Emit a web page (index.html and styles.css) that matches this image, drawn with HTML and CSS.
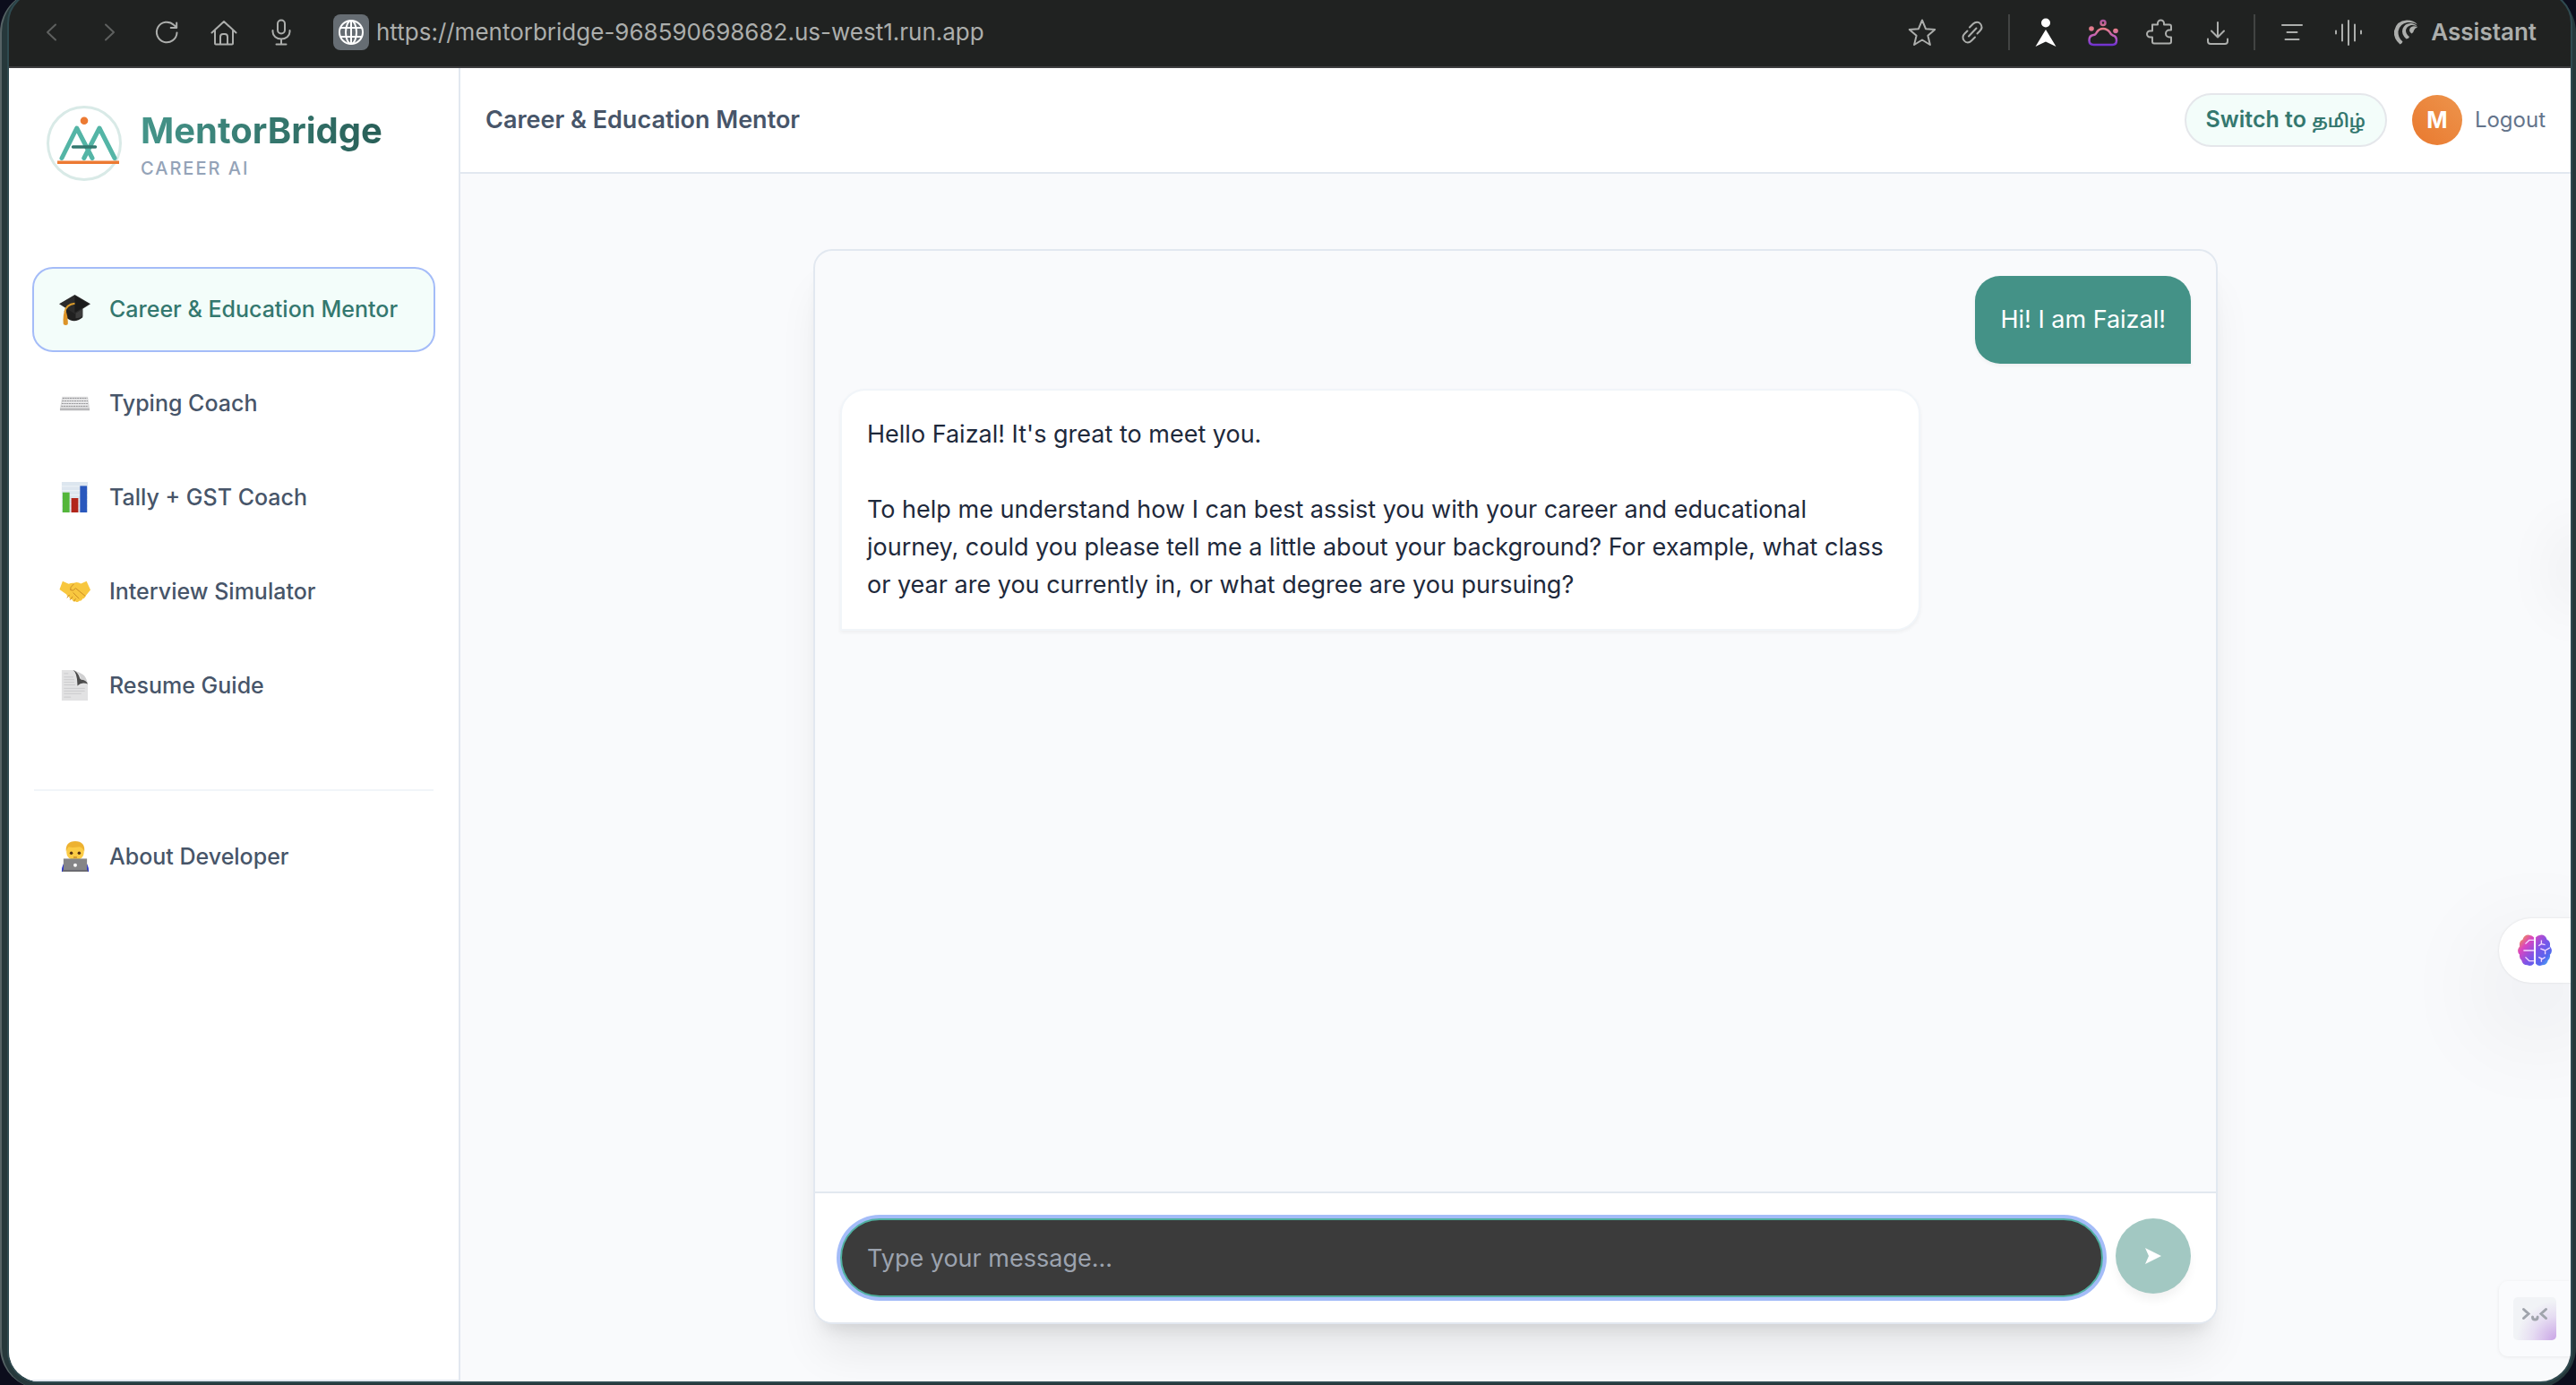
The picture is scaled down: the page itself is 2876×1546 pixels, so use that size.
FILE: index.html
```html
<!DOCTYPE html>
<html lang="en">
<head>
<meta charset="utf-8">
<meta name="viewport" content="width=device-width, initial-scale=1">
<title>MentorBridge Career AI</title>
<link rel="stylesheet" href="styles.css">
</head>
<body>
<div class="window">
  <div class="browser">
    <div class="toolbar">
      <div class="tools">
        <button class="tool tool-dim" aria-label="Back"><svg viewBox="0 0 40 40"><path d="M24 11.500l-9 8.500 9 8.500"/></svg></button>
        <button class="tool tool-dim" aria-label="Forward"><svg viewBox="0 0 40 40"><path d="M16 11.500l9 8.500-9 8.500"/></svg></button>
        <button class="tool" aria-label="Reload"><svg viewBox="0 0 40 40"><path d="M31.500 20.500a11.300 11.300 0 1 1-3.500-8.700l3 2.700M31.200 9.500v5.500h-6.500"/></svg></button>
        <button class="tool" aria-label="Home"><svg viewBox="0 0 40 40"><path d="M6.500 20.500L20 8l13.500 12.500M10 18v14.500q0 1 1 1h18q1 0 1-1V18M16 33v-8q0-3 3-3h2q3 0 3 3v8"/></svg></button>
        <button class="tool" aria-label="Voice"><svg viewBox="0 0 40 40"><rect x="16" y="6.500" width="8" height="15" rx="4"/><path d="M10.500 18v1.500a9.500 8 0 0 0 19 0V18M20 28v5.500M14.500 33.500h11"/></svg></button>
      </div>
      <div class="address">
        <span class="site-icon"><svg viewBox="0 0 40 40"><circle cx="20" cy="20" r="13"/><ellipse cx="20" cy="20" rx="6" ry="13"/><path d="M20 7v26M8.500 15h23M8.500 25h23"/></svg></span>
        <input class="url" type="text" aria-label="Address" value="https://mentorbridge-968590698682.us-west1.run.app">
      </div>
      <div class="tools tools-close">
        <button class="tool" aria-label="Bookmark"><svg viewBox="0 0 40 40"><path d="M20 6.500l4 9.700 10.200.800-7.800 6.800 2.500 10.200L20 28.500 11.100 34l2.500-10.200-7.800-6.800 10.200-.800z"/></svg></button>
        <button class="tool" aria-label="Copy link"><svg viewBox="0 0 40 40"><path d="M17 14.500l4-4c2.500-2.500 6-2.500 8 0s2 5.500-.500 8l-3 3M23 25.500l-4 4c-2.500 2.500-6 2.500-8 0s-2-5.500.500-8l3-3M16 24.500l8.500-9"/></svg></button>
      </div>
      <span class="rule"></span>
      <div class="tools">
        <button class="tool" aria-label="Perspective"><svg class="solid" viewBox="0 0 40 40"><circle cx="20" cy="9.500" r="5"/><path d="M20 17l11.500 19q-6-3-11.500-5.500Q14.500 33 8.500 36z"/></svg></button>
        <button class="tool" aria-label="Cloud"><svg viewBox="0 0 40 40"><defs><linearGradient id="cloud" x1="0" y1="6" x2="0" y2="35" gradientUnits="userSpaceOnUse"><stop offset="0" stop-color="#a8509f"/><stop offset=".350" stop-color="#e87f87"/><stop offset=".700" stop-color="#b457c4"/><stop offset="1" stop-color="#6a2fd0"/></linearGradient></defs><g stroke="url(#cloud)" stroke-width="2.500"><path d="M9.500 34q-5 0-5-5 0-5.500 5-6 2 0 3.500-3 2.500-4 7-4t7.500 4q1 2.500 3.500 3.500 4 1 4 5.500 0 5-4.500 5z"/><circle cx="20" cy="9.500" r="2.500"/></g><g fill="url(#cloud)" stroke="none"><circle cx="7" cy="16" r="2.800"/><circle cx="34" cy="18.500" r="2.800"/></g></svg></button>
        <button class="tool" aria-label="Extensions"><svg viewBox="0 0 40 40"><path d="M11 11.500h6V10a3.500 3.500 0 0 1 7 0v1.500h6q2 0 2 2v4h-2a3.800 3.800 0 0 0 0 8h2v5q0 2-2 2H13q-2 0-2-2v-5H8.500a3.500 3.500 0 0 1 0-7H11z"/></svg></button>
        <button class="tool" aria-label="Downloads"><svg viewBox="0 0 40 40"><path d="M20 9v16M13 18.500l7 7 7-7M9 27.500v2.500q0 3 3 3h16q3 0 3-3v-2.500"/></svg></button>
      </div>
      <span class="rule"></span>
      <div class="tools">
        <button class="tool" aria-label="Reader"><svg viewBox="0 0 40 40"><path d="M10 12h22M15.500 20h11M13.500 28h15"/></svg></button>
        <button class="tool" aria-label="Audio"><svg viewBox="0 0 40 40"><path d="M20 7v27M13 11.500v18M27 11.500v18M6 18.500v3M34 18.500v3"/></svg></button>
        <button class="assistant"><svg viewBox="0 0 40 40"><path d="M13.500 33.500Q6 27 7 18.500 9.500 7 21 6.500q8 0 12 5Q29 8.500 22 9 13 10.500 11.500 19q-.500 7 5 11.500-.500 2-3 3zM20.500 27.500q-6-5.500-4-11.500Q19 9.500 26 10q5 .500 7 4-3-2.500-7-2-5.500 1.500-6 6 0 4 4 7-.500 2-3.500 2.500zM26.500 21.500q-4-3-1.500-6.500 3-3 8-.500-3 .500-4 3.500-.500 3-2.500 3.500z"/></svg>Assistant</button>
      </div>
    </div>

    <div class="app">
      <aside class="sidebar">
        <div class="brand">
          <svg class="brand-mark" viewBox="0 0 84 84"><circle cx="42" cy="42" r="40.500" fill="#fff" stroke="#d9eae7" stroke-width="3"/><g fill="none" stroke-linecap="round" stroke-linejoin="round"><path d="M17 58.500L33.700 25 51 58.500M41.800 58.500L59 25 76 58.500" stroke="#54b5a6" stroke-width="5"/><path d="M29.500 46h25" stroke="#34786f" stroke-width="3.500"/><path d="M12 63.200h69" stroke="#ec7a33" stroke-width="3.500" stroke-linecap="butt"/></g><circle cx="42" cy="16.800" r="4.300" fill="#ec7a33"/></svg>
          <div>
            <div class="brand-name">MentorBridge</div>
            <div class="brand-tag">CAREER AI</div>
          </div>
        </div>
        <nav class="menu">
          <a class="menu-item active" href="#career"><svg viewBox="0 0 36 36"><path d="M8 17v10q9 8 19 0V17z" fill="#202020"/><path d="M19 28q6 0 8-3v-8l-8 5z" fill="#3c3c3c"/><path d="M18 1l18 10.500L18 23 0 11.500z" fill="#2b2b2b"/><path d="M18 2l16 9.500-16 10z" fill="#1b1b1b"/><path d="M18 11q-10 1-11.500 10" fill="none" stroke="#d99a2b" stroke-width="2"/><path d="M6 20q-2 7-1 15 2.500 2 5 0 .500-8-2-15z" fill="#dc9428"/></svg>Career &amp; Education Mentor</a>
          <a class="menu-item" href="#typing"><svg viewBox="0 0 36 36"><path d="M3.500 10h29.500l2 13v2.500H1V23z" fill="#dededf"/><path d="M1 23.500h34V26H1z" fill="#b9b9bb"/><path d="M4 12h28.500M3.500 15h29.500M3 18h30.500M2.500 21h31" stroke="#98989b" stroke-width="1.200" stroke-dasharray="2 .8"/><path d="M4.500 13.500h28M4 16.500h29M3 19.500h30" stroke="#f5f5f6"/></svg>Typing Coach</a>
          <a class="menu-item" href="#tally"><svg viewBox="0 0 36 36"><path d="M3 0h30v35H3z" fill="#dde6ef"/><path d="M3 5h30M3 10h30M3 15h30M3 20h30M3 25h30M3 30h30" stroke="#eef3f8"/><path d="M4 12h8v23H4z" fill="#54b63b"/><path d="M14 18.500h8V35h-8z" fill="#b2251b"/><path d="M24 4.500h8V35h-8z" fill="#2a58bd"/></svg>Tally + GST Coach</a>
          <a class="menu-item" href="#interview"><svg viewBox="0 0 36 36"><path d="M4 6l7 3q3-1.500 6-1 4-2 8 .800L31.500 6 36 16l-5 6q-2 4-4 4-1 3-4 2.500-2 2.500-4 .500-3 1-4-2-3 0-3.500-3-3-1-3-3L.500 15.500z" fill="#f8c73f"/><path d="M17 9q-5 4-4 7 3 2 6-2l11 9M16 19l7 7M12 21.500l-3 3.500M15.500 23.500l-3 4M19 26l-2 3" fill="none" stroke="#c98a25"/></svg>Interview Simulator</a>
          <a class="menu-item" href="#resume"><svg viewBox="0 0 36 36"><path d="M3 0h14q8 2 9 12l7 4v19H3z" fill="#e2e2e3"/><path d="M5.500 4h5M5.500 8h11M5.500 11h12M5.500 14h12M5.500 17h13M5.500 21h24M5.500 24h24M5.500 27h20M5.500 31h8" stroke="#cacacc"/><path d="M16 0q5 3 5 18 5-5 12-2-2-6-9-6-2-8-8-10z" fill="#4c4c4c"/><path d="M18 1q7 3 7 10 6 0 8 5-2-9-6-11-4-3-9-4z" fill="#d0d0d1"/></svg>Resume Guide</a>
          <hr class="divider">
          <a class="menu-item" href="#about"><svg viewBox="0 0 36 36"><path d="M3 35q0-10 6-12h19q6 2 6 12z" fill="#2a35c9"/><path d="M14 18h9v6h-9z" fill="#e8ac2c"/><rect x="8.500" y="2" width="20" height="19" rx="8" fill="#fbcb45"/><path d="M8 12Q7 0 18.500 0T29 12q-2-5-6-5.500-8 1.500-12 0Q9 8 8 12z" fill="#edb231"/><circle cx="14" cy="13.500" r="1.800" fill="#543012"/><circle cx="23" cy="13.500" r="1.800" fill="#543012"/><path d="M16.500 18.500h4" stroke="#a8651c"/><path d="M5 20h27v13.500H5z" fill="#858587"/><path d="M4 33h29v2H4z" fill="#6b6b6e"/><circle cx="18.500" cy="27.500" r="2" fill="#fff"/></svg>About Developer</a>
        </nav>
      </aside>

      <main class="main">
        <header class="header">
          <h1 class="title">Career &amp; Education Mentor</h1>
          <div class="account">
            <button class="language">Switch to <span class="tamil" lang="ta">தமிழ்</span></button>
            <div class="user">
              <span class="avatar">M</span>
              <a class="logout" href="#logout">Logout</a>
            </div>
          </div>
        </header>
        <div class="stage">
          <section class="chat">
            <div class="messages">
              <p class="bubble mine">Hi! I am Faizal!</p>
              <div class="bubble theirs"><p>Hello Faizal! It's great to meet you.</p><p>To help me understand how I can best assist you with your career and educational journey, could you please tell me a little about your background? For example, what class or year are you currently in, or what degree are you pursuing?</p></div>
            </div>
            <form class="composer">
              <input class="field" type="text" placeholder="Type your message..." aria-label="Type your message">
              <button class="send" type="button" aria-label="Send"><svg viewBox="0 0 20 20"><path d="M1 1l18 9-18 9 4-9z"/></svg></button>
            </form>
          </section>
        </div>
      </main>

      <span class="edge-glow"></span>
      <button class="brain-tab" aria-label="Brain"><svg viewBox="0 0 38 34"><defs><linearGradient id="brain" x1="2" y1="2" x2="36" y2="32" gradientUnits="userSpaceOnUse"><stop offset="0" stop-color="#f0a33c"/><stop offset=".250" stop-color="#dc45c0"/><stop offset=".550" stop-color="#7b55e8"/><stop offset=".800" stop-color="#5468ee"/><stop offset="1" stop-color="#4fc3f7"/></linearGradient></defs><path d="M18 3v28q-3 3.500-7 1.500-5 0-6-5-3-3-2-6-4-4 0-9Q2 7 6 5.500 8 0 13 .500q3 0 5 2.500z" fill="url(#brain)"/><path d="M20 3v28q3 3.500 7 1.500 5 0 6-5 3-3 2-6 4-4 0-9 1-5.500-3-7Q30 0 25 .500q-3 0-5 2.500z" fill="url(#brain)"/><g fill="none" stroke="#f3d9ff" stroke-width="1.300"><path d="M18 6h-5l-4 4M18 17H7M18 28h-5l-4-4M26 6v4l-3 2M26 10l4 1M25 15l5 2 5-3M30 17v4M23 24l4 2 3-2M26 26v3"/></g></svg></button>
      <button class="buddy" aria-label="Helper"><span class="buddy-face"><svg viewBox="0 0 48 48"><path d="M11.500 13.500l5.500 5-5.500 5M36.500 13.500l-5.500 5 5.500 5M21.500 22q0 3 2.800 3t2.800-3"/></svg></span></button>
    </div>
  </div>
</div>
</body>
</html>
```
FILE: styles.css
```css
* { box-sizing: border-box; }

html { background: #0c0d1c; }

body {
  margin: 0;
  height: 100vh;
  overflow: hidden;
  font-family: Inter, "Noto Sans", "Noto Sans Tamil", sans-serif;
  font-size: 27px;
  line-height: 42px;
  color: #1e293b;
}

button, input { font: inherit; }

button {
  border: 0;
  padding: 0;
  background: none;
  color: inherit;
}

a { color: inherit; text-decoration: none; }

p, h1 { margin: 0; }

/* Window frame: runs a little past the top and bottom of the viewport */
.window {
  height: calc(100vh + 14px);
  margin-top: -10px;
  padding: 0 4px 6px 6px;
  border-left: 2px solid #566365;
  border-radius: 46px;
  background: #26383b;
}

.browser {
  display: flex;
  flex-direction: column;
  height: 100%;
  overflow: hidden;
  border: 2px solid #2f4a50;
  border-radius: 36px;
  background: #202221;
}

/* Browser toolbar */
.toolbar {
  display: flex;
  align-items: center;
  flex: none;
  height: 84px;
  padding: 6px 38px 0 28px;
  border-bottom: 2px solid #3d3d3f;
  color: #acaeac;
}

.toolbar svg {
  display: block;
  width: 40px;
  height: 40px;
  fill: none;
  stroke: currentColor;
  stroke-width: 2;
  stroke-linecap: round;
  stroke-linejoin: round;
}

.toolbar .solid { fill: #fff; stroke: none; }

.tools { display: flex; align-items: center; gap: 24px; }
.tools-close { gap: 16px; }
.tool-dim { color: #5e605f; }

.address {
  display: flex;
  align-items: center;
  flex: 1;
  gap: 8px;
  padding: 0 38px;
}

.site-icon {
  border-radius: 8px;
  background: #666d73;
  color: #fff;
}

.url {
  flex: 1;
  min-width: 0;
  padding: 0;
  border: 0;
  background: none;
  color: #acaeac;
  font-size: 26px;
}

.rule {
  width: 2px;
  height: 40px;
  margin: 0 20px;
  background: #424443;
}

.assistant {
  display: flex;
  align-items: center;
  gap: 8px;
  font-size: 26px;
  font-weight: 600;
}

.assistant svg { fill: currentColor; stroke: none; }

/* App shell */
.app {
  position: relative;
  display: flex;
  flex: 1;
  min-height: 0;
  overflow: hidden;
  background: #f9fafc;
}

.sidebar {
  flex: none;
  width: 504px;
  border-right: 2px solid #e2e8f0;
  border-bottom: 2px solid #e2e8f0;
  background: #fff;
}

.brand {
  display: flex;
  align-items: center;
  gap: 21px;
  padding: 42px 42px 98px;
}

.brand-mark { width: 84px; height: 84px; }

.brand-name {
  background: linear-gradient(90deg, #45958a, #285e57);
  background-clip: text;
  color: transparent;
  font-size: 40px;
  font-weight: 700;
  line-height: 56px;
}

.brand-tag {
  color: #94a3b8;
  font-size: 20px;
  font-weight: 500;
  line-height: 28px;
  letter-spacing: 2px;
}

.menu {
  display: flex;
  flex-direction: column;
  gap: 14px;
  padding: 0 28px;
}

.menu-item {
  display: flex;
  align-items: center;
  gap: 21px;
  padding: 28px;
  border-radius: 21px;
  color: #475569;
  font-size: 25px;
  font-weight: 500;
  line-height: 35px;
}

.menu-item svg { flex: none; width: 35px; height: 35px; }

.active {
  outline: 2px solid #a4bcf8;
  background: #f3fdfa;
  color: #34786f;
}

.divider {
  width: 100%;
  height: 2px;
  margin: 56px 0 14px;
  border: 0;
  background: #f1f5f9;
}

/* Main column */
.main {
  display: flex;
  flex: 1;
  flex-direction: column;
  min-width: 0;
}

.header {
  display: flex;
  align-items: center;
  justify-content: space-between;
  flex: none;
  padding: 28px;
  border-bottom: 2px solid #e2e8f0;
  background: #fff;
}

.title { color: #475569; font-size: 27px; font-weight: 600; }

.account { display: flex; align-items: center; gap: 28px; }

.language {
  height: 60px;
  padding: 0 22px;
  border: 2px solid #e5e7eb;
  border-radius: 30px;
  background: #f3fdfa;
  color: #34786f;
  font-size: 25px;
  font-weight: 600;
}

.tamil { font-size: 20px; }

.user { display: flex; align-items: center; gap: 14px; }

.avatar {
  width: 56px;
  border-radius: 50%;
  background: linear-gradient(45deg, #e9792f, #ed944c);
  color: #fff;
  font-size: 25px;
  font-weight: 700;
  line-height: 56px;
  text-align: center;
}

.logout { color: #64748b; font-size: 24px; }

.stage {
  display: flex;
  flex: 1;
  justify-content: center;
  min-height: 0;
  padding: 84px 28px 64px;
}

/* Chat */
.chat {
  display: flex;
  flex-direction: column;
  width: 100%;
  max-width: 1568px;
  border: 2px solid #e2e8f0;
  border-radius: 21px;
  background: #f9fafc;
  box-shadow: 0 40px 50px -10px rgba(0, 0, 0, .08), 0 16px 20px -12px rgba(0, 0, 0, .12);
}

.messages {
  display: flex;
  flex: 1;
  flex-direction: column;
  gap: 28px;
  min-height: 0;
  padding: 28px;
}

.bubble {
  max-width: 80%;
  padding: 28px;
  border-radius: 28px;
  box-shadow: 0 2px 4px rgba(0, 0, 0, .05);
}

.mine {
  align-self: flex-end;
  border-bottom-right-radius: 0;
  background: #449287;
  color: #fff;
}

.theirs {
  display: flex;
  flex-direction: column;
  align-self: flex-start;
  gap: 42px;
  border: 2px solid #f1f5f9;
  border-bottom-left-radius: 0;
  background: #fff;
}

.composer {
  display: flex;
  align-items: flex-start;
  gap: 14px;
  padding: 28px;
  border-top: 2px solid #e2e8f0;
  border-radius: 0 0 19px 19px;
  background: #fff;
}

.field {
  flex: 1;
  min-width: 0;
  height: 88px;
  padding: 0 28px;
  border: 2px solid #4fb0a0;
  border-radius: 44px;
  outline: 0;
  background: #3b3b3b;
  box-shadow: 0 0 0 4px #a4bcf8;
  color: #fff;
}

.field::placeholder { color: #9ca3af; opacity: 1; }

.send {
  display: flex;
  align-items: center;
  justify-content: center;
  width: 84px;
  height: 84px;
  border-radius: 50%;
  background: #a2c8c2;
  box-shadow: 0 8px 12px -2px rgba(0, 0, 0, .06);
}

.send svg { width: 20px; height: 20px; fill: #fff; }

/* Widgets docked to the right edge, over the page */
.brain-tab {
  position: absolute;
  right: 0;
  bottom: 445px;
  display: flex;
  align-items: center;
  width: 80px;
  height: 72px;
  padding-left: 20px;
  border-radius: 36px 0 0 36px;
  background: #fff;
  box-shadow: 0 0 2px 1px rgba(0, 0, 0, .05), 0 40px 120px rgba(20, 20, 40, .14);
}

.brain-tab svg { width: 40px; height: 36px; }

.buddy {
  position: absolute;
  right: 0;
  bottom: 28px;
  width: 80px;
  height: 84px;
  padding: 18px 16px;
  border-radius: 10px 0 0 10px;
  background: #fafbfd;
  box-shadow: 0 1px 4px rgba(0, 0, 0, .07);
}

.buddy-face {
  display: block;
  width: 48px;
  height: 48px;
  border-radius: 5px;
  background: radial-gradient(circle at 100% 100%, #c9a4e6, #e6ddf2 40%, #f1f3f6 65%);
}

.buddy svg {
  display: block;
  fill: none;
  stroke: #a0a4ac;
  stroke-width: 3;
  stroke-linecap: round;
}

.edge-glow {
  position: absolute;
  right: -20px;
  top: 520px;
  width: 20px;
  height: 80px;
  box-shadow: 0 0 70px rgba(20, 20, 40, .14);
}
```
